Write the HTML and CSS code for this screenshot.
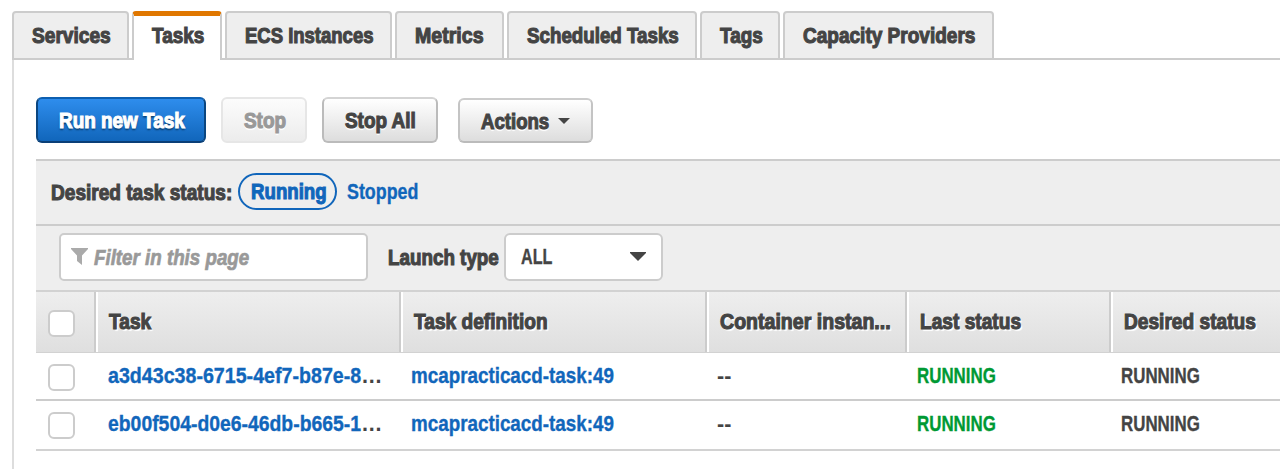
FILE: index.html
```html
<!DOCTYPE html>
<html lang="en">
<head>
<meta charset="utf-8">
<title>Tasks</title>
<link rel="stylesheet" href="styles.css">
</head>
<body>
<nav class="tabs">
  <a class="tab w-services"><span class="t heavy">Services</span></a>
  <a class="tab w-tasks active"><span class="t heavy">Tasks</span></a>
  <a class="tab w-instances"><span class="t heavy">ECS Instances</span></a>
  <a class="tab w-metrics"><span class="t heavy">Metrics</span></a>
  <a class="tab w-scheduled"><span class="t heavy">Scheduled Tasks</span></a>
  <a class="tab w-tags"><span class="t heavy">Tags</span></a>
  <a class="tab w-capacity"><span class="t heavy">Capacity Providers</span></a>
</nav>
<main class="panel">
  <div class="buttons">
    <button class="btn primary"><span class="t heavy">Run new Task</span></button>
    <button class="btn disabled"><span class="t heavy">Stop</span></button>
    <button class="btn stop-all"><span class="t heavy">Stop All</span></button>
    <button class="btn actions"><span class="t heavy">Actions</span><svg class="caret" width="12" height="6" viewBox="0 0 12 6"><path d="M0 0H12L6 6Z"/></svg></button>
  </div>
  <div class="status-bar">
    <span class="t heavy label">Desired task status:</span>
    <a class="pill"><span class="t heavy">Running</span></a>
    <a class="t link stopped">Stopped</a>
  </div>
  <div class="filter-bar">
    <div class="search">
      <svg width="17" height="17" viewBox="0 0 17 17"><path d="M0 0H17V1L11 7.500V17L6 13V7.500L0 1Z"/></svg>
      <span class="t placeholder">Filter in this page</span>
    </div>
    <span class="t heavy launch">Launch type</span>
    <div class="select"><span class="t all">ALL</span><svg class="caret" width="16" height="9" viewBox="0 0 16 9"><path d="M0 0H16V1L8 9L0 1Z"/></svg></div>
  </div>
  <div class="table">
    <div class="row head">
      <div class="check"><i class="box"></i></div>
      <div class="th"><span class="t heavy">Task</span></div>
      <div class="th"><span class="t heavy">Task definition</span></div>
      <div class="th container"><span class="t heavy">Container instan...</span></div>
      <div class="th"><span class="t heavy">Last status</span></div>
      <div class="th last"><span class="t heavy">Desired status</span></div>
    </div>
    <div class="row first">
      <div class="check"><i class="box"></i></div>
      <div class="td id"><a class="t link">a3d43c38-6715-4ef7-b87e-8</a>...</div>
      <div class="td def"><a class="t link">mcapracticacd-task:49</a></div>
      <div class="td">--</div>
      <div class="td run ok"><span class="t">RUNNING</span></div>
      <div class="td run"><span class="t">RUNNING</span></div>
    </div>
    <div class="row second">
      <div class="check"><i class="box"></i></div>
      <div class="td id"><a class="t link">eb00f504-d0e6-46db-b665-1</a>...</div>
      <div class="td def"><a class="t link">mcapracticacd-task:49</a></div>
      <div class="td">--</div>
      <div class="td run ok"><span class="t">RUNNING</span></div>
      <div class="td run"><span class="t">RUNNING</span></div>
    </div>
  </div>
</main>
</body>
</html>
```

FILE: styles.css
```css
* { box-sizing: border-box; }
body {
  margin: 0;
  height: 469px;
  overflow: hidden;
  background: #fff;
  color: #444;
  font: bold 21.5px/26px "Liberation Sans Narrow", "Liberation Sans", sans-serif;
  white-space: nowrap;
}
/* condensed lettering */
.t {
  --s: .88;
  display: inline-block;
  flex-shrink: 0;
  transform: scaleX(var(--s));
  transform-origin: 0 50%;
  -webkit-text-stroke: .35px currentColor;
}
.t.heavy { -webkit-text-stroke: 1.1px currentColor; }
.tabs {
  display: flex;
  gap: 3px;
  height: 60px;
  padding: 11px 0 0 12px;
  background: linear-gradient(#ccc, #ccc) 12px 58px / 1268px 2px no-repeat;
}
.tab {
  height: 49px;
  padding: 10px 0 0 17.5px;
  border: 2px solid #ccc;
  border-radius: 4px 4px 0 0;
  background: #eee;
}
.w-services { width: 117px; }
.w-tasks { width: 90px; }
.w-instances { width: 167px; }
.w-metrics { width: 109px; }
.w-scheduled { width: 190px; }
.w-tags { width: 80px; }
.w-capacity { width: 211px; }
.w-services .t { --s: .89; }
.w-instances .t { --s: .86; }
.w-metrics .t { --s: .91; }
.w-scheduled .t { --s: .872; }
.w-capacity .t { --s: .885; }
.tab.active {
  padding-top: 7px;
  border-top: 5px solid #e07700;
  border-bottom: 0;
  background: #fff;
}
.panel {
  height: 409px;
  margin-left: 12px;
  padding: 37px 0 0 22px;
  border-left: 2px solid #ddd;
}
.buttons {
  display: flex;
  align-items: flex-end;
  gap: 15px;
  height: 46px;
}
.btn {
  display: flex;
  align-items: center;
  height: 46px;
  padding: 2px 0 0 21px;
  border: 2px solid #bbb;
  border-top-color: #d4d4d4;
  border-radius: 6px;
  background: linear-gradient(#fff, #ddd);
  color: #444;
  font: inherit;
  text-shadow: 0 2px 1px #fff;
}
.primary {
  width: 170px;
  border-color: #0d5fb0 #0b4680 #0a3f77;
  background: linear-gradient(#2e8ded, #1166bb);
  color: #fff;
  text-shadow: 0 2px 2px #073763;
}
.disabled {
  width: 86px;
  border-color: #e6e6e6;
  background: linear-gradient(#fcfcfc, #ececec);
  color: #999;
}
.stop-all { width: 116px; }
.actions {
  width: 135px;
  height: 45px;
  margin-left: 5px;
  border-color: #ccc #c4c4c4 #bbb;
}
.actions .t { --s: .865; width: 68px; }
.caret { flex-shrink: 0; fill: #444; }
.actions .caret { margin: -2px 0 0 9px; }
.status-bar {
  display: flex;
  align-items: center;
  height: 67px;
  margin-top: 16px;
  padding: 0 0 2px 15px;
  border-top: 2px solid #ccc;
  border-bottom: 2px solid #ccc;
  background: #eee;
}
.label { --s: .887; width: 187px; padding-top: 2px; }
.pill {
  width: 99px;
  height: 37px;
  padding: 4px 0 0 10.500px;
  border: 2px solid #16b;
  border-radius: 19px;
  color: #16b;
}
.pill .t { --s: .868; }
.link { color: #16b; }
.stopped { --s: .83; margin-left: 10px; }
.filter-bar {
  display: flex;
  align-items: flex-start;
  height: 64px;
  padding: 7px 0 0 23px;
  background: #eee;
}
.search {
  display: flex;
  align-items: center;
  width: 309px;
  height: 48px;
  padding-left: 10px;
  border: 2px solid #ccc;
  border-radius: 5px;
  background: #fff;
  color: #999;
  font-style: italic;
}
.search svg { fill: #aaa; margin: -2px 6px 0 0; }
.t.placeholder { --s: .872; padding-top: 2px; -webkit-text-stroke: .7px currentColor; }
.launch { --s: .875; width: 116px; margin: 12px 0 0 20px; }
.select {
  display: flex;
  align-items: center;
  justify-content: space-between;
  width: 159px;
  height: 48px;
  padding: 0 15px 2px 15px;
  border: 2px solid #ccc;
  border-radius: 6px;
  background: #fff;
}
.all { --s: .75; padding-top: 2px; }
.row {
  display: grid;
  grid-template-columns: 60px 305px 306px 200px 204px 1fr;
}
.head {
  height: 63px;
  border-top: 2px solid #d2d2d2;
  border-bottom: 1px solid #d2d2d2;
  background: linear-gradient(#eee, #dfdfdf);
  text-shadow: 2px 2px 1px #fff;
}
.check { padding: 11px 0 0 12px; }
.head .check { padding-top: 18px; border-right: 2px solid #ccc; }
.box {
  display: block;
  width: 27px;
  height: 27px;
  border: 2px solid #ccc;
  border-radius: 6px;
  background: #fff;
}
.th {
  min-width: 0;
  padding: 17px 0 0 11px;
  border-left: 2px solid #fff;
  border-right: 2px solid #ccc;
}
.th .t { --s: .89; }
.container .t { --s: .91; }
.last { border-right: 0; }
.td { min-width: 0; padding: 10px 0 0 10px; }
.td.id { padding-left: 12px; letter-spacing: .8px; }
.id .t { --s: .913; width: 254px; letter-spacing: 0; }
.second .id .t { --s: .901; }
.def .t { --s: .875; }
.run .t { --s: .785; }
.first { height: 48px; border-bottom: 2px solid #ccc; }
.second { height: 50px; border-bottom: 2px solid #d2d2d2; }
.ok { color: #093; }
```
